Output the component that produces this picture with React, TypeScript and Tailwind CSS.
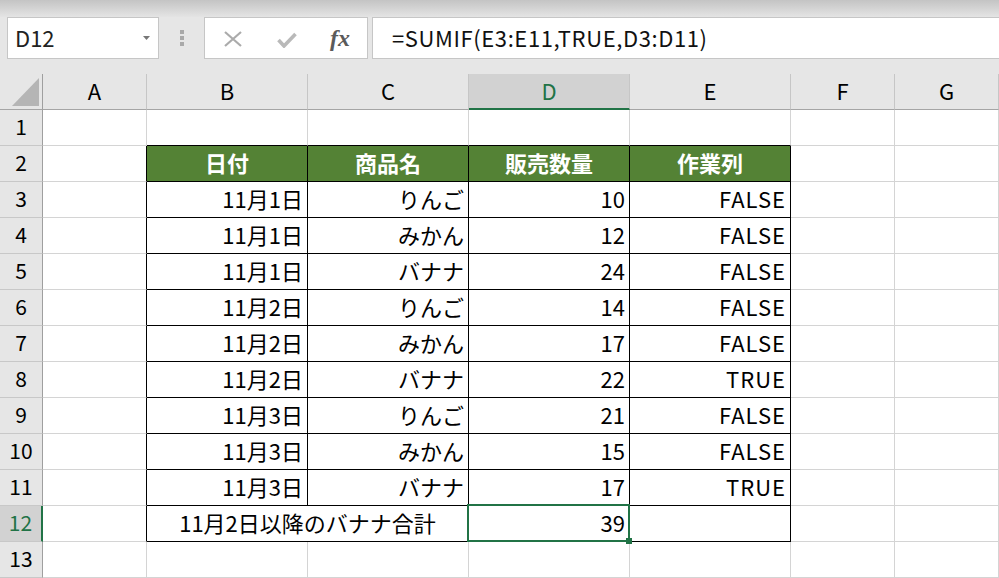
import React from "react";

const rows: [string, string, string, string][] = [
  ["11月1日", "りんご", "10", "FALSE"],
  ["11月1日", "みかん", "12", "FALSE"],
  ["11月1日", "バナナ", "24", "FALSE"],
  ["11月2日", "りんご", "14", "FALSE"],
  ["11月2日", "みかん", "17", "FALSE"],
  ["11月2日", "バナナ", "22", "TRUE"],
  ["11月3日", "りんご", "21", "FALSE"],
  ["11月3日", "みかん", "15", "FALSE"],
  ["11月3日", "バナナ", "17", "TRUE"],
];

const cols = ["A", "B", "C", "D", "E", "F", "G"];

function RowHeader({ n }: { n: number }) {
  const sel = n === 12;
  return (
    <div
      className={
        sel
          ? "flex items-center justify-center pb-[3px] border-b border-b-[#c8c8c8] border-r-2 border-r-[#217346] bg-[#d2d2d2] text-[#217346] text-[21px] leading-none"
          : "flex items-center justify-center pb-[3px] border-b border-b-[#c8c8c8] border-r border-r-[#9f9f9f] bg-[#e6e6e6] text-black text-[21px] leading-none"
      }
    >
      {n}
    </div>
  );
}

function Cell({
  text,
  r,
  c,
}: {
  text?: string;
  r: number;
  c: number;
}) {
  const blackRight = r >= 2 && r <= 12 && c >= 0 && c <= 4;
  const blackBottom = r >= 1 && r <= 12 && c >= 1 && c <= 4;
  const rb = blackRight ? "border-r-black" : "border-r-[#d4d4d4]";
  const bb = blackBottom ? "border-b-black" : "border-b-[#d4d4d4]";
  const head = r === 2 && c >= 1 && c <= 4;
  const base = "flex items-center pb-[3px] border-r border-b text-[22px] leading-none";
  if (head) {
    return (
      <div className={`${base} ${rb} ${bb} justify-center bg-[#548235] text-white font-bold`}>
        {text}
      </div>
    );
  }
  const latin = c === 4;
  return (
    <div
      className={`${base} ${rb} ${bb} justify-end pr-[4px] bg-white text-black ${
        latin ? "tracking-[1px]" : ""
      }`}
    >
      {text}
    </div>
  );
}

export default function App() {
  const gridCells: React.ReactNode[] = [];
  gridCells.push(
    <div
      key="corner"
      className="relative border-r border-r-[#9f9f9f] border-b border-b-[#a5a5a5] bg-[#e6e6e6]"
    >
      <svg className="absolute left-0 top-0" width="43" height="36" viewBox="0 0 43 36">
        <polygon points="12,32 39,4 39,32" fill="#b5b5b5" />
      </svg>
    </div>
  );
  cols.forEach((c) => {
    const sel = c === "D";
    gridCells.push(
      <div
        key={"h" + c}
        className={
          sel
            ? "flex items-center justify-center pb-[2px] border-r border-r-[#c6c6c6] border-b-2 border-b-[#217346] bg-[#d2d2d2] text-[#217346] text-[22px] leading-none"
            : "flex items-center justify-center pb-[3px] border-r border-r-[#c6c6c6] border-b border-b-[#a5a5a5] bg-[#e6e6e6] text-black text-[22px] leading-none"
        }
      >
        {c}
      </div>
    );
  });

  for (let r = 1; r <= 13; r++) {
    gridCells.push(<RowHeader key={"rh" + r} n={r} />);
    if (r === 2) {
      const heads = ["", "日付", "商品名", "販売数量", "作業列", "", ""];
      heads.forEach((t, c) => gridCells.push(<Cell key={`c${r}-${c}`} r={r} c={c} text={t} />));
    } else if (r >= 3 && r <= 11) {
      const d = rows[r - 3];
      const vals = ["", d[0], d[1], d[2], d[3], "", ""];
      vals.forEach((t, c) => gridCells.push(<Cell key={`c${r}-${c}`} r={r} c={c} text={t} />));
    } else if (r === 12) {
      gridCells.push(<Cell key="c12-0" r={12} c={0} />);
      gridCells.push(
        <div
          key="c12-bc"
          className="col-span-2 flex items-center justify-center pb-[3px] border-r border-b border-r-black border-b-black bg-white text-black text-[22px] leading-none"
        >
          11月2日以降のバナナ合計
        </div>
      );
      gridCells.push(<Cell key="c12-3" r={12} c={3} text="39" />);
      gridCells.push(<Cell key="c12-4" r={12} c={4} />);
      gridCells.push(<Cell key="c12-5" r={12} c={5} />);
      gridCells.push(<Cell key="c12-6" r={12} c={6} />);
    } else {
      for (let c = 0; c < 7; c++) gridCells.push(<Cell key={`c${r}-${c}`} r={r} c={c} />);
    }
  }

  return (
    <div className="w-[999px] h-[578px] overflow-hidden bg-[#e6e6e6] font-['Noto_Sans_CJK_JP','Noto_Sans',sans-serif] text-black">
      <div className="h-[17px] bg-gradient-to-b from-[#c4c4c4] to-[#e4e4e4]" />
      <div className="flex h-[42px] items-stretch pl-[7px]">
        <div className="relative flex w-[152px] items-center border border-[#c6c6c6] bg-white pb-[2px] pl-[7px] text-[22px] leading-none text-[#222]">
          D12
          <svg className="absolute left-[135px] top-[18px]" width="7" height="4" viewBox="0 0 7 4">
            <polygon points="0,0 7,0 3.5,4" fill="#777" />
          </svg>
        </div>
        <div className="flex w-[45px] flex-col items-center justify-center gap-[2px]">
          <div className="h-[4px] w-[4px] bg-[#a9a9a9]" />
          <div className="h-[4px] w-[4px] bg-[#a9a9a9]" />
          <div className="h-[4px] w-[4px] bg-[#a9a9a9]" />
        </div>
        <div className="relative w-[164px] border border-[#c6c6c6] bg-white">
          <svg className="absolute left-[19px] top-[13px]" width="18" height="16" viewBox="0 0 18 16">
            <path d="M1 1 L17 15 M17 1 L1 15" stroke="#ababab" strokeWidth="2.2" fill="none" />
          </svg>
          <svg className="absolute left-[72px] top-[14px]" width="20" height="16" viewBox="0 0 20 16">
            <path d="M1.5 8 L7 14 L18.5 2" stroke="#b9b9b9" strokeWidth="3.6" fill="none" />
          </svg>
          <span className="absolute left-[125px] top-[8px] font-['Liberation_Serif',serif] text-[24px] font-bold italic leading-none text-[#5a5a5a]">
            fx
          </span>
        </div>
        <div className="ml-[4px] flex flex-1 items-center border border-r-0 border-[#c6c6c6] bg-white pb-[2px] pl-[19px] text-[22px] leading-none tracking-[0.6px] text-[#111]">
          =SUMIF(E3:E11,TRUE,D3:D11)
        </div>
      </div>
      <div className="h-[15px]" />
      <div className="relative grid grid-cols-[43px_104px_161px_161px_161px_161px_104px_104px] auto-rows-[36px] bg-white">
        {gridCells}
        <div className="absolute left-[467px] top-[430px] h-[38px] w-[163px] border-2 border-[#217346]" />
        <div className="absolute left-[626px] top-[464px] h-[6px] w-[6px] bg-[#217346]" />
      </div>
    </div>
  );
}
